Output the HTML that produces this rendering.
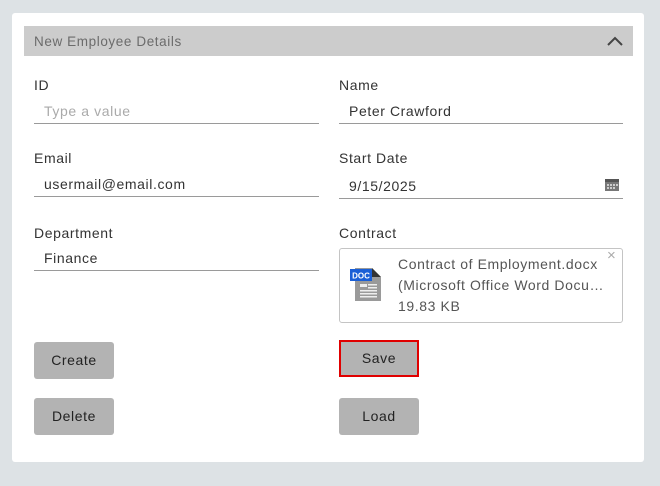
<!DOCTYPE html>
<html><head><style>
*{margin:0;padding:0;box-sizing:border-box}
body{width:660px;height:486px;background:#dde2e5;font-family:"Liberation Sans",sans-serif;position:relative;overflow:hidden;color:#333;letter-spacing:0.6px}
.card{position:absolute;left:12px;top:13px;width:632px;height:449px;background:#fff;border-radius:3px}
.hdr{position:absolute;left:24px;top:26px;width:609px;height:30px;background:#cccccc;color:#6b6b6b;font-size:13.5px;line-height:31px;padding-left:10px}
.lbl{position:absolute;font-size:14px;color:#333}
.inp{position:absolute;height:26px;border-bottom:1px solid #9a9a9a;font-size:14px;line-height:26px;padding-left:10px;color:#333}
.btn{position:absolute;width:80px;height:37px;background:#b3b3b3;border-radius:3px;font-size:14px;line-height:37px;text-align:center;color:#222}
</style></head><body>
<div class="card"></div>
<div class="hdr">New Employee Details</div>
<svg style="position:absolute;left:606px;top:35px" width="18" height="12"><path d="M2 10 L9 3 L16 10" fill="none" stroke="#444" stroke-width="2"/></svg>

<div class="lbl" style="left:34px;top:77px">ID</div>
<div class="inp" style="left:34px;top:98px;width:285px;color:#aaa">Type a value</div>
<div class="lbl" style="left:339px;top:77px">Name</div>
<div class="inp" style="left:339px;top:98px;width:284px">Peter Crawford</div>

<div class="lbl" style="left:34px;top:150px">Email</div>
<div class="inp" style="left:34px;top:171px;width:285px">usermail@email.com</div>
<div class="lbl" style="left:339px;top:150px">Start Date</div>
<div class="inp" style="left:339px;top:173px;width:284px">9/15/2025</div>
<svg style="position:absolute;left:605px;top:179px" width="14" height="12"><rect x="0" y="0" width="14" height="12" fill="#777"/><rect x="0" y="0" width="14" height="3" fill="#555"/><g fill="#ccc"><rect x="2" y="5" width="2" height="2"/><rect x="5" y="5" width="2" height="2"/><rect x="8" y="5" width="2" height="2"/><rect x="11" y="5" width="2" height="2"/><rect x="2" y="8" width="2" height="2"/><rect x="5" y="8" width="2" height="2"/><rect x="8" y="8" width="2" height="2"/></g></svg>

<div class="lbl" style="left:34px;top:225px">Department</div>
<div class="inp" style="left:34px;top:245px;width:285px">Finance</div>
<div class="lbl" style="left:339px;top:225px">Contract</div>
<div style="position:absolute;left:339px;top:248px;width:284px;height:75px;border:1px solid #c4c4c4;border-radius:3px"></div>
<svg style="position:absolute;left:350px;top:268px" width="32" height="34"><path d="M5 0 H22 L31 9 V33 H5 Z" fill="#9a9a9a"/><path d="M22 0 L31 9 H22 Z" fill="#333"/><rect x="0" y="1" width="22" height="12" fill="#1a5fd6"/><text x="11" y="10.5" font-size="8" font-family="Liberation Sans" font-weight="bold" fill="#fff" text-anchor="middle" letter-spacing="0">DOC</text><g fill="#eee"><rect x="10" y="16" width="7" height="3"/><rect x="18" y="16" width="9" height="1.5"/><rect x="18" y="19" width="9" height="1.5"/><rect x="10" y="22" width="17" height="1.5"/><rect x="10" y="25" width="17" height="1.5"/><rect x="10" y="28" width="17" height="1.5"/></g></svg>
<div style="position:absolute;left:398px;top:254px;font-size:14px;line-height:21px;color:#555;width:210px;white-space:nowrap;overflow:hidden">Contract of Employment.docx<br>(Microsoft Office Word Docu…<br>19.83 KB</div>
<div style="position:absolute;left:607px;top:247px;font-size:15px;color:#aaa">×</div>

<div class="btn" style="left:34px;top:342px">Create</div>
<div class="btn" style="left:339px;top:340px;border:2px solid #e00000;border-radius:0;line-height:33px">Save</div>
<div class="btn" style="left:34px;top:398px">Delete</div>
<div class="btn" style="left:339px;top:398px">Load</div>
</body></html>
